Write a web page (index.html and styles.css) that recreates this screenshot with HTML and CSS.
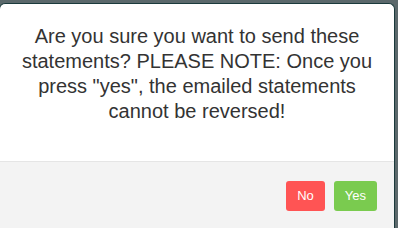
FILE: index.html
```html
<!DOCTYPE html>
<html>
<head>
    <title>Send Statements</title>
    <meta charset="UTF-8">
    <link rel="stylesheet" href="styles.css">
</head>
<body>
    <div class="modal-content">
        <div class="modal-body">
            <p>Are you sure you want to send these statements? PLEASE NOTE: Once you press "yes", the emailed statements cannot be reversed!</p>
        </div>
        <div class="modal-footer">
            <button class="btn no-btn">No</button>
            <button class="btn yes-btn">Yes</button>
        </div>
    </div>
</body>
</html>
```

FILE: styles.css
```css
html, body {
    margin: 0;
    height: 228px;
    overflow: hidden;
}

body {
    background-color: #5b686b;
    font-family: "Liberation Sans", Arial, sans-serif;
}

.modal-content {
    display: flex;
    flex-direction: column;
    margin: 3px 0 0 -1px;
    width: 396px;
    height: 225px;
    background-color: #fff;
    border: 1px solid #1b3a3c;
    border-bottom: none;
    border-radius: 6px 6px 0 0;
    overflow: hidden;
    box-sizing: border-box;
}

.modal-body {
    padding: 20px 20px 37px 20px;
}

.modal-body p {
    margin: 0;
    font-size: 20px;
    line-height: 25px;
    color: #333;
    text-align: center;
}

.modal-footer {
    flex: 1;
    display: flex;
    justify-content: flex-end;
    align-items: flex-start;
    gap: 9px;
    padding: 19px 17px 0 20px;
    background-color: #f3f3f3;
    border-top: 1px solid #e5e5e5;
}

.btn {
    padding: 5px 10px;
    font-family: "Liberation Sans", Arial, sans-serif;
    font-size: 13px;
    line-height: 18px;
    height: 30px;
    color: #fff;
    border: 1px solid transparent;
    border-radius: 3px;
    cursor: pointer;
}

.no-btn {
    background-color: #ff5454;
}

.yes-btn {
    background-color: #7acb4f;
}
```
